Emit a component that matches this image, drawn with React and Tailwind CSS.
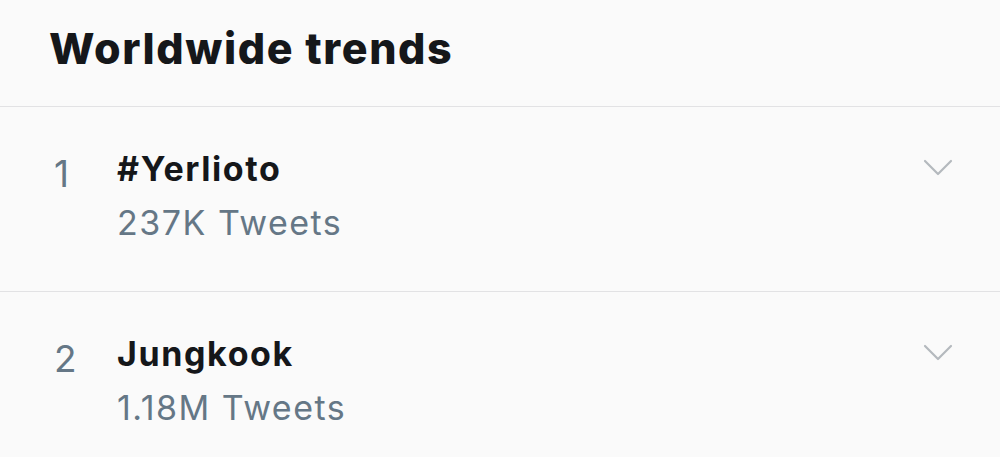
import React from "react";

const trends = [
  { rank: 1, title: "#Yerlioto", count: "237K Tweets" },
  { rank: 2, title: "Jungkook", count: "1.18M Tweets" },
];

function Chevron() {
  return (
    <svg width="30" height="18" viewBox="0 0 30 18" fill="none" className="mt-[7px]">
      <path d="M2 2 L15 15 L28 2" stroke="#b4b9be" strokeWidth="2.2" strokeLinecap="round" strokeLinejoin="round" />
    </svg>
  );
}

export default function App() {
  return (
    <div
      className="min-h-screen w-full bg-[#fafafa] overflow-hidden"
      style={{ fontFamily: "Inter, 'Noto Sans', sans-serif" }}
    >
      <div className="pl-[49px] pt-[27px] pb-[36px]">
        <h1 className="text-[43px] leading-none font-extrabold text-[#15171a] tracking-[1.6px]">
          Worldwide trends
        </h1>
      </div>
      {trends.map((t) => (
        <div key={t.rank} className="border-t border-[#e2e2e4] h-[185px] flex items-start pt-[45px] pr-[47px]">
          <div className="w-[117px] pl-[54px] shrink-0 text-[37px] leading-none font-normal text-[#657786] mt-[3px]">
            {t.rank}
          </div>
          <div className="flex-1 flex flex-col">
            <div className="text-[34px] leading-none font-bold text-[#15171a] tracking-[1.6px]">{t.title}</div>
            <div className="mt-[20px] text-[34px] leading-none font-normal text-[#657786] tracking-[1.5px]">{t.count}</div>
          </div>
          <Chevron />
        </div>
      ))}
    </div>
  );
}
